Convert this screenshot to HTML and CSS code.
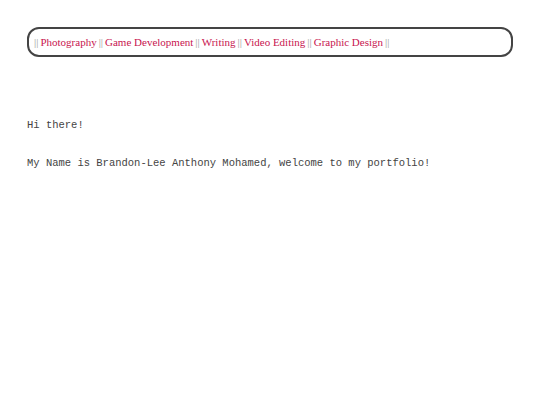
FILE: index.html
```html
<!DOCTYPE html>
<html>
<head>
<meta charset="utf-8">
<link rel="stylesheet" href="styles.css">
</head>
<body>
<nav class="nav">
<span class="sep">||</span> <a class="link">Photography</a> <span class="sep">||</span> <a class="link">Game Development</a> <span class="sep">||</span> <a class="link">Writing</a> <span class="sep">||</span> <a class="link">Video Editing</a> <span class="sep">||</span> <a class="link">Graphic Design</a> <span class="sep">||</span>
</nav>
<main class="content">
<p class="line">Hi there!</p>
<p class="line">My Name is Brandon-Lee Anthony Mohamed, welcome to my portfolio!</p>
</main>
</body>
</html>
```

FILE: styles.css
```css
html, body {
  margin: 0;
  padding: 0;
  background: #fff;
}
body {
  padding: 27px 27px 0 27px;
}
.nav {
  border: 2px solid #444;
  border-radius: 12px;
  height: 30px;
  box-sizing: border-box;
  padding: 0 0 0 5px;
  display: flex;
  align-items: center;
  gap: 2px;
  font-family: "Liberation Serif", serif;
  font-size: 11px;
  white-space: nowrap;
}
.sep {
  color: #999;
}
.link {
  color: #c8144f;
}
.content {
  padding-top: 62px;
  font-family: "Liberation Mono", monospace;
  font-size: 10.5px;
  color: #444;
}
.line {
  margin: 0 0 26px 0;
}
```
